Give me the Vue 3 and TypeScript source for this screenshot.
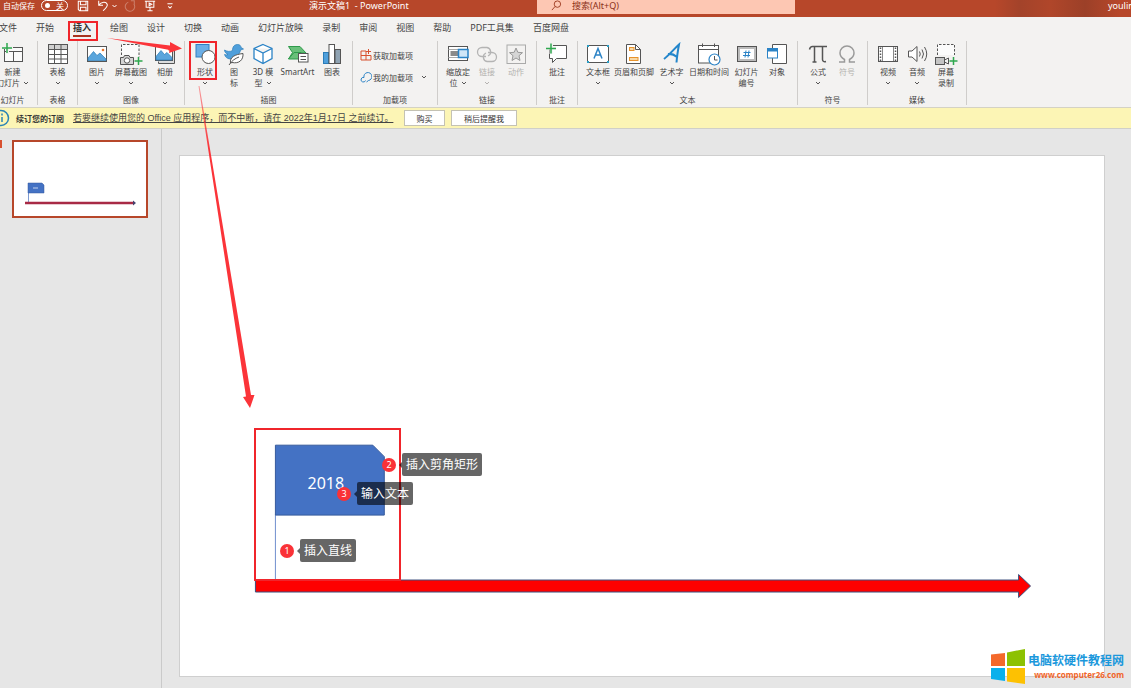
<script setup lang="ts">
interface Tool {
  icon: string
  lines: string[]
  size?: string
  menu?: boolean
  disabled?: boolean
}
interface Group {
  label: string
  name: string
  tools: Tool[]
}

const tabs: string[] = ['文件', '开始', '插入', '绘图', '设计', '切换', '动画', '幻灯片放映', '录制', '审阅', '视图', '帮助', 'PDF工具集', '百度网盘']

const groups: Group[] = [
  { label: '幻灯片', name: 'g-slide', tools: [{ icon: 'newSlide', lines: ['新建', '幻灯片'], menu: true, size: 'w40' }] },
  { label: '表格', name: 'g-table', tools: [{ icon: 'table', lines: ['表格'], menu: true }] },
  {
    label: '图像', name: 'g-image', tools: [
      { icon: 'picture', lines: ['图片'], menu: true, size: 'w32' },
      { icon: 'screenshot', lines: ['屏幕截图'], menu: true, size: 'w36' },
      { icon: 'album', lines: ['相册'], menu: true, size: 'w32' },
    ],
  },
  {
    label: '插图', name: 'g-illus', tools: [
      { icon: 'shapes', lines: ['形状'], menu: true },
      { icon: 'icons', lines: ['图', '标'] },
      { icon: 'cube', lines: ['3D 模', '型'], menu: true },
      { icon: 'smartart', lines: ['SmartArt'], size: 'w40' },
      { icon: 'chart', lines: ['图表'] },
    ],
  },
  { label: '加载项', name: 'g-addin', tools: [] },
  {
    label: '链接', name: 'g-link', tools: [
      { icon: 'zoom', lines: ['缩放定', '位'], menu: true },
      { icon: 'link', lines: ['链接'], menu: true, disabled: true },
      { icon: 'action', lines: ['动作'], disabled: true },
    ],
  },
  { label: '批注', name: 'g-note', tools: [{ icon: 'comment', lines: ['批注'] }] },
  {
    label: '文本', name: 'g-text', tools: [
      { icon: 'textbox', lines: ['文本框'], menu: true },
      { icon: 'header', lines: ['页眉和页脚'], size: 'w43' },
      { icon: 'wordart', lines: ['艺术字'], menu: true, size: 'w32' },
      { icon: 'date', lines: ['日期和时间'], size: 'w43' },
      { icon: 'number', lines: ['幻灯片', '编号'], size: 'w32' },
      { icon: 'object', lines: ['对象'] },
    ],
  },
  {
    label: '符号', name: 'g-symbol', tools: [
      { icon: 'pi', lines: ['公式'], menu: true },
      { icon: 'omega', lines: ['符号'], disabled: true },
    ],
  },
  {
    label: '媒体', name: 'g-media', tools: [
      { icon: 'video', lines: ['视频'], menu: true },
      { icon: 'audio', lines: ['音频'], menu: true },
      { icon: 'record', lines: ['屏幕', '录制'] },
    ],
  },
]

const plus = (x: number, y: number, r: number) =>
  `<path d="M${x - r} ${y}H${x + r}M${x} ${y - r}V${y + r}" stroke="#2fa84f" stroke-width="1.5"/>`

const hills = '<path d="M3 16L8.500 9.500L12 13.500L15 11L21 17V18.500H3Z" fill="#5aa5dc" stroke="#2b7cb8" stroke-width=".7"/><circle cx="18" cy="8" r="1.300" fill="#e8762c" stroke="none"/>'

const icons: Record<string, string> = {
  newSlide: `<rect x="3.500" y="5.500" width="18" height="14" fill="#fafafa"/><path d="M3.500 9.500H21.500M12.500 9.500V19.500"/><path d="M6.500 0V12M0 5.500H12" stroke="#f3f2f1" stroke-width="3"/>${plus(6, 6, 5)}`,
  table: '<rect x="2.500" y="2.500" width="19" height="19" fill="#fff"/><path d="M3 3H21V7H3Z" fill="#d0d0d0" stroke="none"/><path d="M2.500 7.500H21.500M2.500 12.500H21.500M2.500 17H21.500M8.500 2.500V21.500M15 2.500V21.500"/>',
  picture: `<rect x="2.500" y="4.500" width="19" height="15" fill="#fff"/>${hills}`,
  screenshot: `<path d="M2.500 13V2.500H20V15" fill="#fbfbfb" stroke-dasharray="2.500 1.500"/><path d="M1.500 15.500H4.500L5.500 13.500H10L11 15.500H14.500V22.500H1.500Z" fill="#d4d4d4"/><circle cx="8" cy="18.500" r="2.700" fill="#fff"/>${plus(19.5, 19, 4)}`,
  album: `<path d="M5.500 19.500V21.500H21.500V8.500H19.500" fill="#ddd"/><rect x="2.500" y="4.500" width="17" height="14" fill="#fff"/><path d="M3 14.500L8 8.500L11.500 12.500L14 10.500L19 15.500V18H3Z" fill="#5aa5dc" stroke="#2b7cb8" stroke-width=".7"/><circle cx="16.500" cy="7.500" r="1.300" fill="#e8762c" stroke="none"/>`,
  shapes: '<rect x="3" y="2.500" width="13" height="12.500" fill="#6aaee6" stroke="#2f7fc4"/><circle cx="15.500" cy="15" r="6.500" fill="#fff"/>',
  icons: '<path d="M2.500 8C5 9.500 8 10 10.500 8.500C10.500 4.500 12.500 2.500 15.500 2.500C18 2.500 19 4 19 5.500L21.500 7L18.500 8C18 11 17 12 14 14.500C10 18.500 4 17.500 2.500 12.500C4 13 5 13 6 12.500C4 11.500 2.500 10 2.500 8Z" fill="#4f9fdb" stroke="#2b7cb8" stroke-width=".7"/><path d="M8.500 21C7.500 15 13 12.500 21 11.500C21.500 18 17 22 10 20.500Z" fill="#fff"/><path d="M7 23C10 18.500 13 16.500 17 15"/>',
  cube: '<path d="M12 2.500L21 6.500V16.500L12 21.500L3 16.500V6.500ZM3 6.500L12 11L21 6.500M12 11V21.500" fill="#fff" stroke="#2b83c6" stroke-width="1.300"/>',
  smartart: '<path d="M2.500 4.500H14L20 11H8.500L2.500 17L6.500 10.500Z" fill="#69c07a" stroke="#2f9a4b"/><path d="M2.500 17L8 10.500H15V17Z" fill="#69c07a" stroke="#2f9a4b"/><rect x="12.500" y="11.500" width="9.500" height="8.500" fill="#fff"/><path d="M14.500 14.500H20M14.500 17.500H20"/>',
  chart: '<rect x="3.500" y="10.500" width="5" height="11" fill="#4f9fdb" stroke="#2b7cb8"/><rect x="9" y="2.500" width="5.500" height="19" fill="#fff"/><rect x="15" y="7.500" width="5.500" height="14" fill="#8fa3b3"/>',
  zoom: '<rect x="2.500" y="4.500" width="19" height="14" fill="#fff"/><path d="M2.500 7.500H14M2.500 15.500H14" stroke="#aaa"/><rect x="4.500" y="9" width="8" height="5" fill="#8a8a8a" stroke="none"/><rect x="12.500" y="7.500" width="9.500" height="8" fill="#cfe6f7" stroke="#2b83c6" stroke-width="1.500"/>',
  link: '<path d="M11 14.500H7A4.500 4.500 0 0 1 7 5.500H12A4.500 4.500 0 0 1 13 14M13 10.500H17A4.500 4.500 0 0 1 17 19.500H12A4.500 4.500 0 0 1 11 11" stroke="#b4b4b4" stroke-width="1.300"/>',
  action: '<rect x="3" y="3" width="18.500" height="18.500" stroke="#aaa"/><path d="M12 6L13.800 10.300L18.500 10.700L15 13.700L16 18.500L12 16L8 18.500L9 13.700L5.500 10.700L10.200 10.300Z" fill="#d6d6d6" stroke="#999"/>',
  comment: `<path d="M4.500 5V16.500H7.500V20.500L11.500 16.500H21.500V3.500H8" fill="#fff"/><path d="M0 6H11M6 2V12" stroke="#f3f2f1" stroke-width="3"/>${plus(6, 6.5, 5)}`,
  textbox: '<rect x="1.500" y="3.500" width="21" height="17" fill="#fff"/><path d="M8 16.500L12 6.500L16 16.500M9.500 13H14.500" stroke="#2b83c6" stroke-width="1.500"/><path d="M1 3H3V5H1ZM21 3H23V5H21ZM1 19H3V21H1ZM21 19H23V21H21Z" fill="#2b9fc6" stroke="none"/>',
  header: '<path d="M4.500 2.500H13.500L18.500 7.500V21.500H4.500Z" fill="#fff"/><path d="M13.500 2.500V7.500H18.500"/><rect x="7.500" y="5.500" width="4.500" height="3" fill="#f7d9a8" stroke="#e8932c"/><rect x="7.500" y="15.500" width="8.500" height="3" fill="#f7d9a8" stroke="#e8932c"/>',
  wordart: '<path d="M4 17C9 13 14 7 19 2.500C18 8 17 14 16.500 20.500M8 12C11 11.500 14 12.500 17 15" stroke="#2386cb" stroke-width="2"/>',
  date: '<rect x="1.500" y="3.500" width="20" height="17.500" fill="#fff"/><path d="M1.500 7.500H21.500M5.500 1.500V5M17.500 1.500V5"/><circle cx="17.500" cy="17.500" r="5.500" fill="#fff" stroke="#2b83c6" stroke-width="1.200"/><path d="M17.500 14V18H20.500"/>',
  number: '<rect x="2.500" y="4.500" width="19" height="15" fill="#fff"/><rect x="4" y="6" width="16" height="12" stroke="#bbb" stroke-width="2"/><path d="M11 8.500L10 15.500M14 8.500L13 15.500M8.500 10.500H15.500M8 13.500H15" stroke="#2b83c6"/>',
  object: '<path d="M7.500 2.500H21.500V21.500H7.500Z" fill="#fff"/><rect x="2.500" y="6.500" width="10" height="9.500" fill="#fff" stroke="#2b83c6"/><path d="M2.500 8H12.500" stroke="#2b83c6" stroke-width="3"/>',
  pi: '<path d="M3.500 7.500C4 5 5 4.500 6.500 4.500H21M8.500 5V20M6.500 20H10.500M16.500 5V17.500C16.500 19.500 18 20 20 19.500" stroke-width="1.500"/>',
  omega: '<path d="M4 20H9.500V17.500C6 15.500 5 13.500 5 11A7 7 0 0 1 19 11C19 13.500 18 15.500 14.500 17.500V20H20" stroke="#9a9a9a" stroke-width="1.500"/>',
  video: '<rect x="2.500" y="4.500" width="19" height="15" fill="#fff"/><path d="M4.500 5.500V19M19.500 5.500V19" stroke-width="1.500" stroke-dasharray="1.500 1.500"/><path d="M6.500 4.500V19.500M17.500 4.500V19.500" stroke-width=".7"/>',
  audio: '<path d="M3.500 9H7L12 4.500V19.500L7 15H3.500Z" fill="#fff"/><path d="M14.500 9.500Q16 12 14.500 14.500M17 7.500Q20 12 17 16.500M19.500 5Q24 12 19.500 19"/>',
  record: `<path d="M3.500 13V2.500H20.500V13" fill="#fbfbfb" stroke-dasharray="2.500 1.500"/><rect x="1.500" y="15.500" width="9" height="7" fill="#c4c4c4"/><path d="M10.500 18L14.500 16V22L10.500 20"/>${plus(19.5, 19, 4)}`,
}
</script>

<template>
  <div class="app">
    <header class="titlebar">
      <div class="quick">
        <label class="autosave" for="autosave">自动保存</label>
        <span class="toggle"><input id="autosave" type="checkbox" /><i></i><b>关</b></span>
        <button class="qa save" aria-label="保存"><svg viewBox="0 0 14 14"><path d="M1.500 1.500H12.500V12.500H3L1.500 11ZM4 1.500V5.500H10.500V1.500M4 12.500V8.500H10.500V12.500" /></svg></button>
        <button class="qa undo" aria-label="撤消"><svg viewBox="0 0 14 14"><path d="M2 1V6H7M2 6C5 2 11 1 12 5.500C12.500 8 10 10 7 12.500" /></svg></button>
        <svg class="tinychev" viewBox="0 0 5 4"><path d="M.5 1L2.500 3L4.500 1" /></svg>
        <button class="qa redo" aria-label="恢复" disabled><svg viewBox="0 0 14 14"><path d="M8 1H12V5M11.500 4.500A5.500 5.500 0 1 1 5 2.500" /></svg></button>
        <button class="qa show" aria-label="放映"><svg viewBox="0 0 14 14"><path d="M1 1.500H13M2.500 1.500V8.500H11.500V1.500M7 8.500V12.500M4 12.500H10M6 3.500L9 5L6 6.500Z" /></svg></button>
        <button class="qa more" aria-label="自定义"><svg viewBox="0 0 14 14"><path d="M4 4.500H10M5 7.500L7 9.500L9 7.500" /></svg></button>
      </div>
      <div class="doc">演示文稿1 &nbsp;- PowerPoint</div>
      <div class="search">
        <svg viewBox="0 0 12 12"><circle cx="7" cy="4.500" r="3.500" /><path d="M4.500 7L1 11" /></svg>
        <input type="text" aria-label="搜索" placeholder="搜索(Alt+Q)" />
      </div>
      <div class="user"><span>youlin</span></div>
    </header>

    <nav class="tabs">
      <button v-for="t in tabs" :key="t" :class="{ active: t === '插入' }">{{ t }}</button>
    </nav>

    <section class="ribbon">
      <div v-for="g in groups" :key="g.label" class="group" :class="g.name">
        <div v-if="g.tools.length" class="tools">
          <button v-for="t in g.tools" :key="t.icon" class="tool" :class="t.size" :disabled="t.disabled">
            <svg class="icon" viewBox="0 0 24 24" v-html="icons[t.icon]"></svg>
            <span v-for="(l, i) in t.lines" :key="l" class="line">{{ l }}<svg v-if="t.menu && i === 1" class="chev inline" viewBox="0 0 6 4"><path d="M1 1L3 3L5 1" /></svg></span>
            <span v-if="t.menu && t.lines.length === 1" class="line"><svg class="chev" viewBox="0 0 6 4"><path d="M1 1L3 3L5 1" /></svg></span>
          </button>
        </div>
        <div v-else class="addins">
          <button>
            <svg viewBox="0 0 12 12"><path d="M1 2H6V11H1ZM1 6.500H11V11H6M8.500 0V5M6 2.500H11" stroke="#d8502f" /></svg>获取加载项
          </button>
          <button>
            <svg viewBox="0 0 12 12"><path d="M4 6.500A4 4 0 1 1 8.500 9.500L6.500 11M4 6.500A2.300 2.300 0 1 0 5.500 9.500" stroke="#2b83c6" /></svg>我的加载项<svg class="chev" viewBox="0 0 6 4"><path d="M1 1L3 3L5 1" /></svg>
          </button>
        </div>
        <div class="glabel">{{ g.label }}</div>
      </div>
    </section>

    <section class="notice">
      <svg class="info" viewBox="0 0 18 18"><circle cx="9" cy="9" r="7.500" /><path d="M10 8V13M10 4.500V6.500" /></svg>
      <strong>续订您的订阅</strong>
      <a href="#">若要继续使用您的 Office 应用程序，而不中断，请在 2022年1月17日 之前续订。</a>
      <button class="buy">购买</button>
      <button class="later">稍后提醒我</button>
    </section>

    <main class="work">
      <aside class="thumbs">
        <span class="mark"></span>
        <div class="thumb">
          <svg viewBox="0 0 132 74">
            <path d="M14.500 41V61" stroke="#7f9bd1" />
            <path d="M14 41H28L30 43V51H14Z" fill="#4472c4" stroke="#35599c" stroke-width=".5" />
            <path d="M19 46H24" stroke="#c5d2ec" />
            <path d="M11 61H120" stroke="#a82a45" stroke-width="2.500" />
            <path d="M119 58.500L122 61L119 63.500Z" fill="#44426f" />
          </svg>
        </div>
      </aside>
      <div class="stage">
        <div class="slide">
          <svg viewBox="0 0 925 521">
            <path d="M95.500 359V424" stroke="#6f8fce" />
            <path d="M95.500 289.500H193L204.500 301V359.500H95.500Z" fill="#4472c4" stroke="#35599c" />
            <text x="146" y="333" text-anchor="middle">2018</text>
            <path d="M75.500 424.500H839.500V419L851.500 430.500L839.500 442V436.500H75.500Z" fill="#fe0000" stroke="#3c4f7d" />
          </svg>
        </div>
      </div>
    </main>

    <svg class="arrows" viewBox="0 0 270 420">
      <defs>
        <linearGradient id="fade" x1="0" y1="0" x2="0" y2="1">
          <stop offset="0" stop-color="#fb3439" stop-opacity=".45" />
          <stop offset=".2" stop-color="#fb3439" />
        </linearGradient>
      </defs>
      <path d="M107 38L170 45.500V42L182 48.500L169 53L169.500 50Z" />
      <path d="M198.500 86L199.500 86L251 395L254.500 395L250 408L243 397L246 396.500Z" fill="url(#fade)" />
    </svg>
    <div class="frame frame-tab"></div>
    <div class="frame frame-shape"></div>
    <div class="frame frame-flag"></div>

    <div class="callout c2"><b>2</b><span>插入剪角矩形</span></div>
    <div class="callout c3"><b>3</b><span>输入文本</span></div>
    <div class="callout c1"><b>1</b><span>插入直线</span></div>

    <div class="brand">
      <svg viewBox="0 0 36 36">
        <path d="M1 5.500L15 4V17H1Z" fill="#f4692b" />
        <path d="M17 3.500L35 0V17H17Z" fill="#8dc102" />
        <path d="M1 19H15V32L1 30Z" fill="#0ab0ec" />
        <path d="M17 19H35V35L17 32.500Z" fill="#fdc102" />
      </svg>
      <div><strong>电脑软硬件教程网</strong><em>www.computer26.com</em></div>
    </div>
  </div>
</template>

<style>
body {
  margin: 0;
  overflow: hidden;
}
</style>

<style scoped>
.app {
  position: relative;
  display: flex;
  flex-direction: column;
  min-height: 100vh;
  overflow: hidden;
  background: #e6e6e6;
  color: #444;
  font: 8px/11px "Noto Sans", "Noto Sans CJK SC", sans-serif;
}
.app * { box-sizing: border-box; }
button {
  border: 0;
  padding: 0;
  background: none;
  color: inherit;
  font: inherit;
}
svg { fill: none; flex: none; }
.titlebar {
  display: grid;
  grid-template-columns: 309px 228px 258px 1fr;
  height: 17px;
  background: #b7472a;
  color: #fff;
}
.quick { display: flex; height: 11px; padding-left: 3px; align-items: center; }
.toggle {
  position: relative;
  display: flex;
  align-items: center;
  width: 27px;
  height: 11px;
  margin: 0 9px 0 6px;
  border: 1px solid #fff;
  border-radius: 6px;
}
.toggle input { position: absolute; inset: 0; margin: 0; opacity: 0; }
.toggle i { width: 5px; height: 5px; margin: 0 6px 0 3px; border-radius: 50%; background: #fff; }
.toggle b { font-weight: 400; }
.qa { height: 12px; }
.qa svg { display: block; width: 12px; height: 12px; stroke: #fff; stroke-width: 1.2; }
.undo { margin-left: 8px; }
.tinychev { width: 5px; height: 4px; margin-left: 3px; stroke: #fff; }
.redo { margin-left: 7px; opacity: .3; }
.show { margin-left: 8px; }
.more { margin-left: 8px; }
.doc { font-size: 9px; white-space: nowrap; }
.search {
  display: flex;
  align-items: center;
  height: 14px;
  padding: 0 0 3px 14px;
  background: #fdc7b3;
}
.search svg { width: 11px; height: 11px; stroke: #9d3a20; }
.search input {
  width: 180px;
  height: 11px;
  margin-left: 10px;
  padding: 0;
  border: 0;
  background: none;
  color: #8a3018;
  font: 9px/11px "Noto Sans", "Noto Sans CJK SC", sans-serif;
}
.search input::placeholder { color: #8a3018; opacity: 1; }
.user {
  overflow: hidden;
  background: linear-gradient(90deg, transparent 200px, #a3432a 225px, #b0462a 255px, #9c4028 290px, transparent 325px);
  font-size: 9px;
  white-space: nowrap;
}
.user span { display: block; margin-left: 313px; }
.tabs {
  display: flex;
  gap: 19px;
  height: 24px;
  background: #f3f2f1;
  font-size: 9px;
}
.tabs button { flex: none; height: 20px; padding-top: 2px; border-bottom: 2px solid transparent; white-space: nowrap; }
.tabs button:first-child { margin-left: -1px; }
.tabs .active { border-color: #a8331f; color: #333; font-weight: 700; }
.ribbon {
  display: flex;
  height: 67px;
  padding-bottom: 2px;
  background: #f3f2f1;
  border-bottom: 1px solid #d4d2c4;
}
.group {
  display: flex;
  flex: none;
  flex-direction: column;
  justify-content: space-between;
  border-right: 1px solid #cfcdcb;
}
.g-slide { width: 50px; margin-left: -12px; }
.g-table { width: 40px; }
.g-image { width: 107px; }
.g-illus { width: 168px; }
.g-addin { width: 85px; }
.g-link { width: 99px; }
.g-note { width: 41px; }
.g-text { width: 220px; }
.g-symbol { width: 70px; }
.g-media { width: 99px; }
.tools { display: flex; justify-content: center; padding-top: 1px; }
.tool { display: flex; flex-direction: column; align-items: center; width: 29px; white-space: nowrap; }
.w32 { width: 32px; }
.w36 { width: 36px; }
.w40 { width: 40px; }
.w43 { width: 43px; }
.icon { width: 24px; height: 24px; stroke: #555; }
.line { display: flex; align-items: center; justify-content: center; height: 11px; }
.chev { width: 6px; height: 4px; stroke: #555; }
.inline { margin-left: 3px; }
.tool:disabled { color: #b4b2b0; }
.tool:disabled .chev { stroke: #b4b2b0; }
.glabel { height: 11px; text-align: center; }
.addins { display: flex; flex-direction: column; gap: 10px; padding: 8px 0 0 7px; }
.addins button { display: flex; align-items: center; height: 12px; }
.addins svg { width: 12px; height: 12px; margin-right: 1px; }
.addins .chev { width: 6px; height: 4px; margin-left: 8px; }
.notice {
  display: flex;
  align-items: center;
  height: 21px;
  background: #fcf5b5;
  border-bottom: 1px solid #d0d0c8;
  color: #333;
  white-space: nowrap;
}
.info { width: 18px; height: 18px; margin: 0 6px 0 -8px; stroke: #2b83b6; stroke-width: 1.5; }
.notice strong { width: 57px; }
.notice a {
  width: 331px;
  color: #444;
  font: 9px/11px "Liberation Sans", "Noto Sans CJK SC", sans-serif;
  text-decoration: underline;
}
.notice button { height: 16px; background: #fff; border: 1px solid #c4c2b4; }
.buy { width: 41px; margin-right: 6px; }
.later { width: 66px; }
.work { display: flex; flex: 1; }
.thumbs { display: flex; align-items: flex-start; width: 162px; padding-top: 11px; border-right: 1px solid #cacaca; }
.mark { width: 2px; height: 8px; background: #d8502f; }
.thumb { width: 136px; margin-left: 10px; border: 2px solid #b7472a; background: #fff; }
.thumb svg { display: block; width: 100%; }
.stage { display: flex; flex: 1; padding: 26px 26px 11px 17px; }
.slide { flex: 1; border: 1px solid #cfcfcf; background: #fff; }
.slide svg { display: block; width: 100%; }
.slide text { fill: #fff; font-size: 16px; }
.arrows { position: absolute; left: 0; top: 0; width: 270px; height: 420px; fill: #fb3439; pointer-events: none; }
.frame { position: absolute; border: 2px solid #f0252b; pointer-events: none; }
.frame-tab { left: 68px; top: 21px; width: 30px; height: 20px; }
.frame-shape { left: 189px; top: 41px; width: 28px; height: 39px; }
.frame-flag { left: 254px; top: 428px; width: 147px; height: 153px; }
.callout { position: absolute; display: flex; align-items: center; gap: 6px; color: #fff; font-size: 12px; }
.callout b {
  width: 14px;
  height: 14px;
  border-radius: 50%;
  background: #fa3237;
  font-size: 9px;
  font-weight: 400;
  line-height: 14px;
  text-align: center;
}
.callout span {
  position: relative;
  height: 23px;
  padding: 0 4px;
  border-radius: 2px;
  background: rgba(0, 0, 0, .6);
  line-height: 23px;
  white-space: nowrap;
}
.callout span::before {
  content: "";
  position: absolute;
  left: -3px;
  top: 9px;
  border: 3px solid transparent;
  border-left-width: 0;
  border-right-color: rgba(0, 0, 0, .6);
}
.c2 { left: 382px; top: 453px; }
.c3 { left: 337px; top: 482px; }
.c1 { left: 280px; top: 539px; }
.brand { position: absolute; right: 7px; bottom: 3px; display: flex; align-items: center; gap: 2px; white-space: nowrap; }
.brand svg { width: 36px; height: 36px; }
.brand strong { display: block; color: #1b98dc; font-size: 12px; line-height: 16px; }
.brand em { display: block; color: #f0652a; font-size: 8px; font-style: normal; font-weight: 700; line-height: 12px; text-align: right; }
</style>
